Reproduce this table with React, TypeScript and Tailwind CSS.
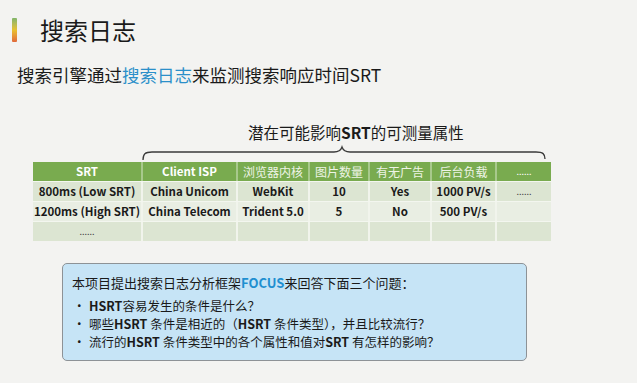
const cjk = { fontFamily: '"Noto Sans CJK SC", "Noto Sans", sans-serif' };

const cols = ["w-[110px]", "w-[95px]", "w-[72px]", "w-[60px]", "w-[62px]", "w-[65px]", "w-[54px]"];

const header = ["SRT", "Client ISP", "浏览器内核", "图片数量", "有无广告", "后台负载", "......"];

const rows = [
  ["800ms (Low SRT)", "China Unicom", "WebKit", "10", "Yes", "1000 PV/s", "......"],
  ["1200ms (High SRT)", "China Telecom", "Trident 5.0", "5", "No", "500 PV/s", ""],
  ["......", "", "", "", "", "", ""],
];

function Brace() {
  return (
    <svg width="406" height="16" viewBox="0 0 406 16" className="block">
      <path
        d="M1 15 C1 9 3 7 10 7 L192 7 C197 7 199 5 200 2 C201 5 203 7 208 7 L394 7 C401 7 403 9 403 14"
        fill="none"
        stroke="#3a3a3a"
        strokeWidth="1.3"
      />
    </svg>
  );
}

export default function App() {
  return (
    <div className="w-[637px] h-[383px] bg-[#f3f3f1] overflow-hidden text-[#1a1a1a]" style={cjk}>
      {/* title */}
      <div className="flex items-center pt-[14px] h-[46px]">
        <div className="ml-[12px] w-[5px] h-[24px] rounded-[1px] bg-gradient-to-b from-[#7fb56a] via-[#e8c12e] to-[#e0683a]" />
        <div className="ml-[23px] text-[24px] leading-none">搜索日志</div>
      </div>

      <div className="mt-[20px] ml-[17px] text-[17.5px] leading-none">
        搜索引擎通过<span className="text-[#2b8fc9]">搜索日志</span>来监测搜索响应时间SRT
      </div>

      <div className="mt-[41px] ml-[248px] text-[15.5px] leading-none">
        潜在可能影响<span className="font-bold">SRT</span>的可测量属性
      </div>

      <div className="mt-[5px] mb-[1px] ml-[142px]">
        <Brace />
      </div>

      {/* table */}
      <div className="ml-[33px] w-[518px] text-[11.5px] font-bold">
        <div className="flex h-[19px] bg-[#79ab4f] text-white">
          {header.map((h, i) => (
            <div
              key={i}
              className={`${cols[i]} flex items-center justify-center border-r-[2px] border-[#a8c98c] last:border-r-0 ${
                h === "......"
                  ? "text-[9px] font-normal"
                  : i < 2
                  ? "font-bold"
                  : "font-normal text-[12px] text-[#eef4e6]"
              }`}
            >
              {h}
            </div>
          ))}
        </div>
        {rows.map((r, ri) => (
          <div
            key={ri}
            className={`flex h-[20px] border-t border-[#f3f6ef] ${ri === 1 ? "bg-[#e9eee3]" : "bg-[#dce5d2]"}`}
          >
            {r.map((c, ci) => (
              <div
                key={ci}
                className={`${cols[ci]} flex items-center justify-center border-r-[2px] border-[#f1f4ec] last:border-r-0 ${
                  c === "......" ? "text-[9px] text-[#444] font-normal" : ""
                }`}
              >
                {c}
              </div>
            ))}
          </div>
        ))}
      </div>

      {/* question box */}
      <div className="mt-[22px] ml-[62px] w-[465px] h-[98px] bg-[#c6e4f6] border border-[#8d9296] rounded-[5px] pl-[9px] pt-[10px] text-[13px] leading-[18px]">
        <div>
          本项目提出搜索日志分析框架<span className="text-[#1f8fd0] font-bold">FOCUS</span>来回答下面三个问题：
        </div>
        <ul className="mt-[5px] text-[12.5px] leading-[18px]">
          <li className="flex">
            <span className="w-[17px] pl-[1px]">•</span>
            <span>
              <b>HSRT</b>容易发生的条件是什么？
            </span>
          </li>
          <li className="flex">
            <span className="w-[17px] pl-[1px]">•</span>
            <span>
              哪些<b>HSRT</b> 条件是相近的（<b>HSRT</b> 条件类型），并且比较流行？
            </span>
          </li>
          <li className="flex">
            <span className="w-[17px] pl-[1px]">•</span>
            <span>
              流行的<b>HSRT</b> 条件类型中的各个属性和值对<b>SRT</b> 有怎样的影响？
            </span>
          </li>
        </ul>
      </div>
    </div>
  );
}
